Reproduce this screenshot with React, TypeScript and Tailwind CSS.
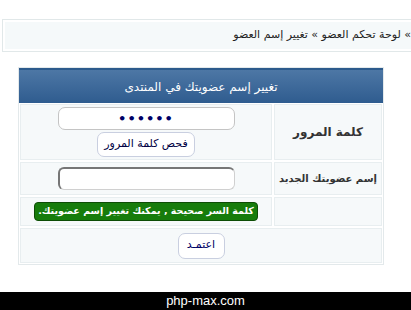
export default function App() {
  return (
    <div
      className="relative flex h-[310px] w-[411px] flex-col overflow-hidden bg-white"
      style={{ fontFamily: '"DejaVu Sans", Tahoma, sans-serif' }}
    >
      {/* breadcrumb */}
      <div className="mt-[19px] ml-[2px] w-[420px] border border-[#e1e8e9] p-[2px]">
        <div
          dir="rtl"
          className="flex h-[27px] items-center bg-[#f5f9fa] pr-[8px] text-[11px] text-[#222]"
        >
          » لوحة تحكم العضو » تغيير إسم العضو
        </div>
      </div>

      {/* form table */}
      <div className="mt-[15px] ml-[18px] w-[366px] border border-[#e3e9eb]">
        <div className="flex h-[35px] items-center justify-center border-t-2 border-[#2c5a8c] bg-gradient-to-b from-[#4d77a5] to-[#2f5c8f] text-[12px] text-white">
          <span dir="rtl">تغيير إسم عضويتك في المنتدى</span>
        </div>

        <div dir="rtl" className="grid grid-cols-[108px_1fr] gap-[2px] bg-white p-[1px]">
          <div className="flex h-[56px] items-center justify-center border border-[#e8eef0] bg-[#f6f9fa] text-[12px] font-bold text-[#333]">
            كلمة المرور
          </div>
          <div className="flex h-[56px] flex-col items-center justify-center gap-[2px] border border-[#e8eef0] bg-[#f6f9fa]">
            <div className="flex h-[23px] w-[177px] items-center justify-center rounded-[7px] border border-[#c4c4c4] bg-white text-[13px] font-bold tracking-[1px] text-[#000066]">
              ••••••
            </div>
            <button className="h-[25px] rounded-[7px] border border-[#c9cfe0] bg-white px-[6px] text-[11px] text-[#000044]">
              فحص كلمة المرور
            </button>
          </div>

          <div className="flex h-[33px] items-center justify-center whitespace-nowrap border border-[#e8eef0] bg-[#f6f9fa] text-[10px] font-bold text-[#333]">
            إسم عضويتك الجديد
          </div>
          <div className="flex h-[33px] items-center justify-center border border-[#e8eef0] bg-[#f6f9fa]">
            <div className="h-[23px] w-[177px] rounded-[6px] border-t-2 border-r border-b border-l-2 border-t-[#767676] border-r-[#d0d0d0] border-b-[#d0d0d0] border-l-[#767676] bg-white" />
          </div>

          <div className="h-[29px] border border-[#e8eef0] bg-[#f6f9fa]" />
          <div className="flex h-[29px] items-center justify-center border border-[#e8eef0] bg-[#f6f9fa]">
            <span className="whitespace-nowrap rounded-[4px] border border-[#0d4d05] bg-[#167c0b] px-[3px] py-[1px] text-[9.5px] font-bold text-white">
              كلمة السر صحيحة , يمكنك تغيير إسم عضويتك.
            </span>
          </div>

          <div className="col-span-2 flex h-[35px] items-center justify-center border border-[#e8eef0] bg-[#f6f9fa]">
            <button className="h-[26px] w-[47px] rounded-[7px] border border-[#c9cfe0] bg-white text-[11px] text-[#000066]">
              اعتمـد
            </button>
          </div>
        </div>
      </div>

      {/* footer */}
      <div
        className="mt-auto flex h-[18px] items-center justify-center bg-black text-[13px] text-white"
        style={{ fontFamily: '"Liberation Sans", Arial, sans-serif' }}
      >
        php-max.com
      </div>
    </div>
  );
}
